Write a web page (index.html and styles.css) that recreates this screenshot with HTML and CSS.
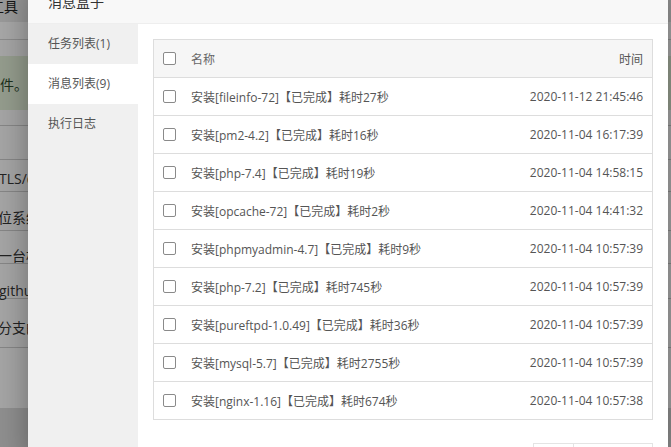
FILE: index.html
```html
<!DOCTYPE html>
<html lang="zh-CN">
<head>
<meta charset="utf-8">
<title>消息盒子</title>
<link rel="stylesheet" href="styles.css">
</head>
<body>
<div class="page">
  <div class="page-top"><span class="shift">工具</span></div>
  <div class="page-sub"></div>
  <div class="page-alert"><span class="shift2">文件。</span></div>
  <div class="page-row r0"></div>
  <div class="page-row r1"></div>
  <div class="page-row r2"><span class="shift3">TLS/dns</span></div>
  <div class="page-row r3"><span class="shift4">位系统</span></div>
  <div class="page-row r4"><span class="shift4">一台机器</span></div>
  <div class="page-row r5"><span class="shift3">github</span></div>
  <div class="page-row r6"><span class="shift4">分支的</span></div>
  <div class="page-rest"></div>
  <div class="page-foot"></div>
</div>
<div class="shade"></div>

<div class="modal">
  <div class="modal-title">消息盒子</div>
  <div class="modal-body">
    <ul class="side">
      <li class="side-item">任务列表(1)</li>
      <li class="side-item active">消息列表(9)</li>
      <li class="side-item">执行日志</li>
    </ul>
    <div class="content">
      <table class="list">
        <thead>
          <tr><th class="c-chk"><span class="chk"></span></th><th class="c-name">名称</th><th class="c-time">时间</th></tr>
        </thead>
        <tbody>
          <tr><td class="c-chk"><span class="chk"></span></td><td class="c-name">安装[fileinfo-72]【已完成】耗时27秒</td><td class="c-time">2020-11-12 21:45:46</td></tr>
          <tr><td class="c-chk"><span class="chk"></span></td><td class="c-name">安装[pm2-4.2]【已完成】耗时16秒</td><td class="c-time">2020-11-04 16:17:39</td></tr>
          <tr><td class="c-chk"><span class="chk"></span></td><td class="c-name">安装[php-7.4]【已完成】耗时19秒</td><td class="c-time">2020-11-04 14:58:15</td></tr>
          <tr><td class="c-chk"><span class="chk"></span></td><td class="c-name">安装[opcache-72]【已完成】耗时2秒</td><td class="c-time">2020-11-04 14:41:32</td></tr>
          <tr><td class="c-chk"><span class="chk"></span></td><td class="c-name">安装[phpmyadmin-4.7]【已完成】耗时9秒</td><td class="c-time">2020-11-04 10:57:39</td></tr>
          <tr><td class="c-chk"><span class="chk"></span></td><td class="c-name">安装[php-7.2]【已完成】耗时745秒</td><td class="c-time">2020-11-04 10:57:39</td></tr>
          <tr><td class="c-chk"><span class="chk"></span></td><td class="c-name">安装[pureftpd-1.0.49]【已完成】耗时36秒</td><td class="c-time">2020-11-04 10:57:39</td></tr>
          <tr><td class="c-chk"><span class="chk"></span></td><td class="c-name">安装[mysql-5.7]【已完成】耗时2755秒</td><td class="c-time">2020-11-04 10:57:39</td></tr>
          <tr><td class="c-chk"><span class="chk"></span></td><td class="c-name">安装[nginx-1.16]【已完成】耗时674秒</td><td class="c-time">2020-11-04 10:57:38</td></tr>
        </tbody>
      </table>
      <div class="pager">
        <span class="pg first">1</span><span class="pg wide">共9条</span>
      </div>
    </div>
  </div>
</div>
</body>
</html>
```

FILE: styles.css
```css
html, body {
  margin: 0;
  padding: 0;
}
body {
  width: 671px;
  height: 447px;
  overflow: hidden;
  position: relative;
  font-family: "Open Sans", "Noto Sans CJK SC", sans-serif;
  font-size: 12px;
  color: #555;
}

/* background page (under the shade) */
.page {
  width: 671px;
  height: 447px;
  background: #f7f7f7;
  color: #222;
  font-size: 14px;
  overflow: hidden;
}
.page-top {
  height: 22px;
  line-height: 14px;
  background: #e4e4e4;
  white-space: nowrap;
}
.shift { display: inline-block; margin-left: -10px; }
.page-sub {
  height: 17px;
  background: #f9f9f9;
  border-bottom: 1px solid #cfcfcf;
}
.page-alert {
  margin-top: 16px;
  height: 54px;
  line-height: 58px;
  background: #dde9d3;
  color: #2e4a2c;
  white-space: nowrap;
}
.shift2 { display: inline-block; margin-left: -14px; }
.page-row {
  box-sizing: border-box;
  line-height: 20px;
  border-bottom: 1px solid #c8c8c8;
  white-space: nowrap;
  color: #333;
}
.page-row.r0 { height: 16px; }
.page-row.r1 { height: 34px; }
.page-row.r2 { height: 32px; padding-top: 9px; }
.page-row.r3 { height: 39px; padding-top: 16px; }
.page-row.r4 { height: 33px; padding-top: 15px; }
.page-row.r5 { height: 35px; padding-top: 17px; }
.page-row.r6 { height: 49px; padding-top: 19px; }
.page-rest { height: 60px; }
.page-foot { height: 60px; background: #d6d6d6; }
.shift3 { display: inline-block; margin-left: -1px; }
.shift4 { display: inline-block; margin-left: -2px; }

.shade {
  position: absolute;
  inset: 0;
  background: rgba(0, 0, 0, 0.33);
}

/* modal */
.modal {
  position: absolute;
  left: 28px;
  top: -18px;
  width: 640px;
  height: 480px;
  background: #fff;
  box-shadow: 0 0 30px rgba(0, 0, 0, 0.35);
  display: flex;
  flex-direction: column;
}
.modal-title {
  height: 42px;
  line-height: 40px;
  padding-left: 20px;
  font-size: 14px;
  color: #333;
  background: #f8f8f8;
  border-bottom: 1px solid #eee;
  box-sizing: border-box;
  flex: none;
}
.modal-body {
  flex: 1;
  display: flex;
}
.side {
  list-style: none;
  margin: 0;
  padding: 0;
  width: 110px;
  background: #f0f0f0;
  flex: none;
}
.side-item {
  height: 40px;
  line-height: 40px;
  padding-left: 20px;
  color: #555;
}
.side-item.active {
  background: #fff;
}
.content {
  flex: 1;
  padding: 15px;
}
.list {
  width: 500px;
  border-collapse: collapse;
  border: 1px solid #ddd;
}
.list th, .list td {
  height: 37px;
  padding: 0;
  border-bottom: 1px solid #ddd;
  font-weight: normal;
  text-align: left;
  vertical-align: middle;
}
.list thead th {
  background: #f6f6f6;
  color: #666;
}
.list .c-chk {
  width: 28px;
  padding-left: 9px;
}
.chk {
  display: block;
  width: 11px;
  height: 11px;
  border: 1px solid #8a8a8a;
  border-radius: 2px;
  background: #fff;
}
.c-name {
  color: #555;
}
.list .c-time {
  text-align: right;
  padding-right: 9px;
  color: #555;
}
.pager {
  display: flex;
  justify-content: flex-end;
  margin-top: 23px;
}
.pg {
  box-sizing: border-box;
  height: 30px;
  line-height: 28px;
  border: 1px solid #e4e4e4;
  text-align: center;
  color: #666;
}
.pg.first { width: 41px; }
.pg.wide { width: 79px; border-left: none; }
```
